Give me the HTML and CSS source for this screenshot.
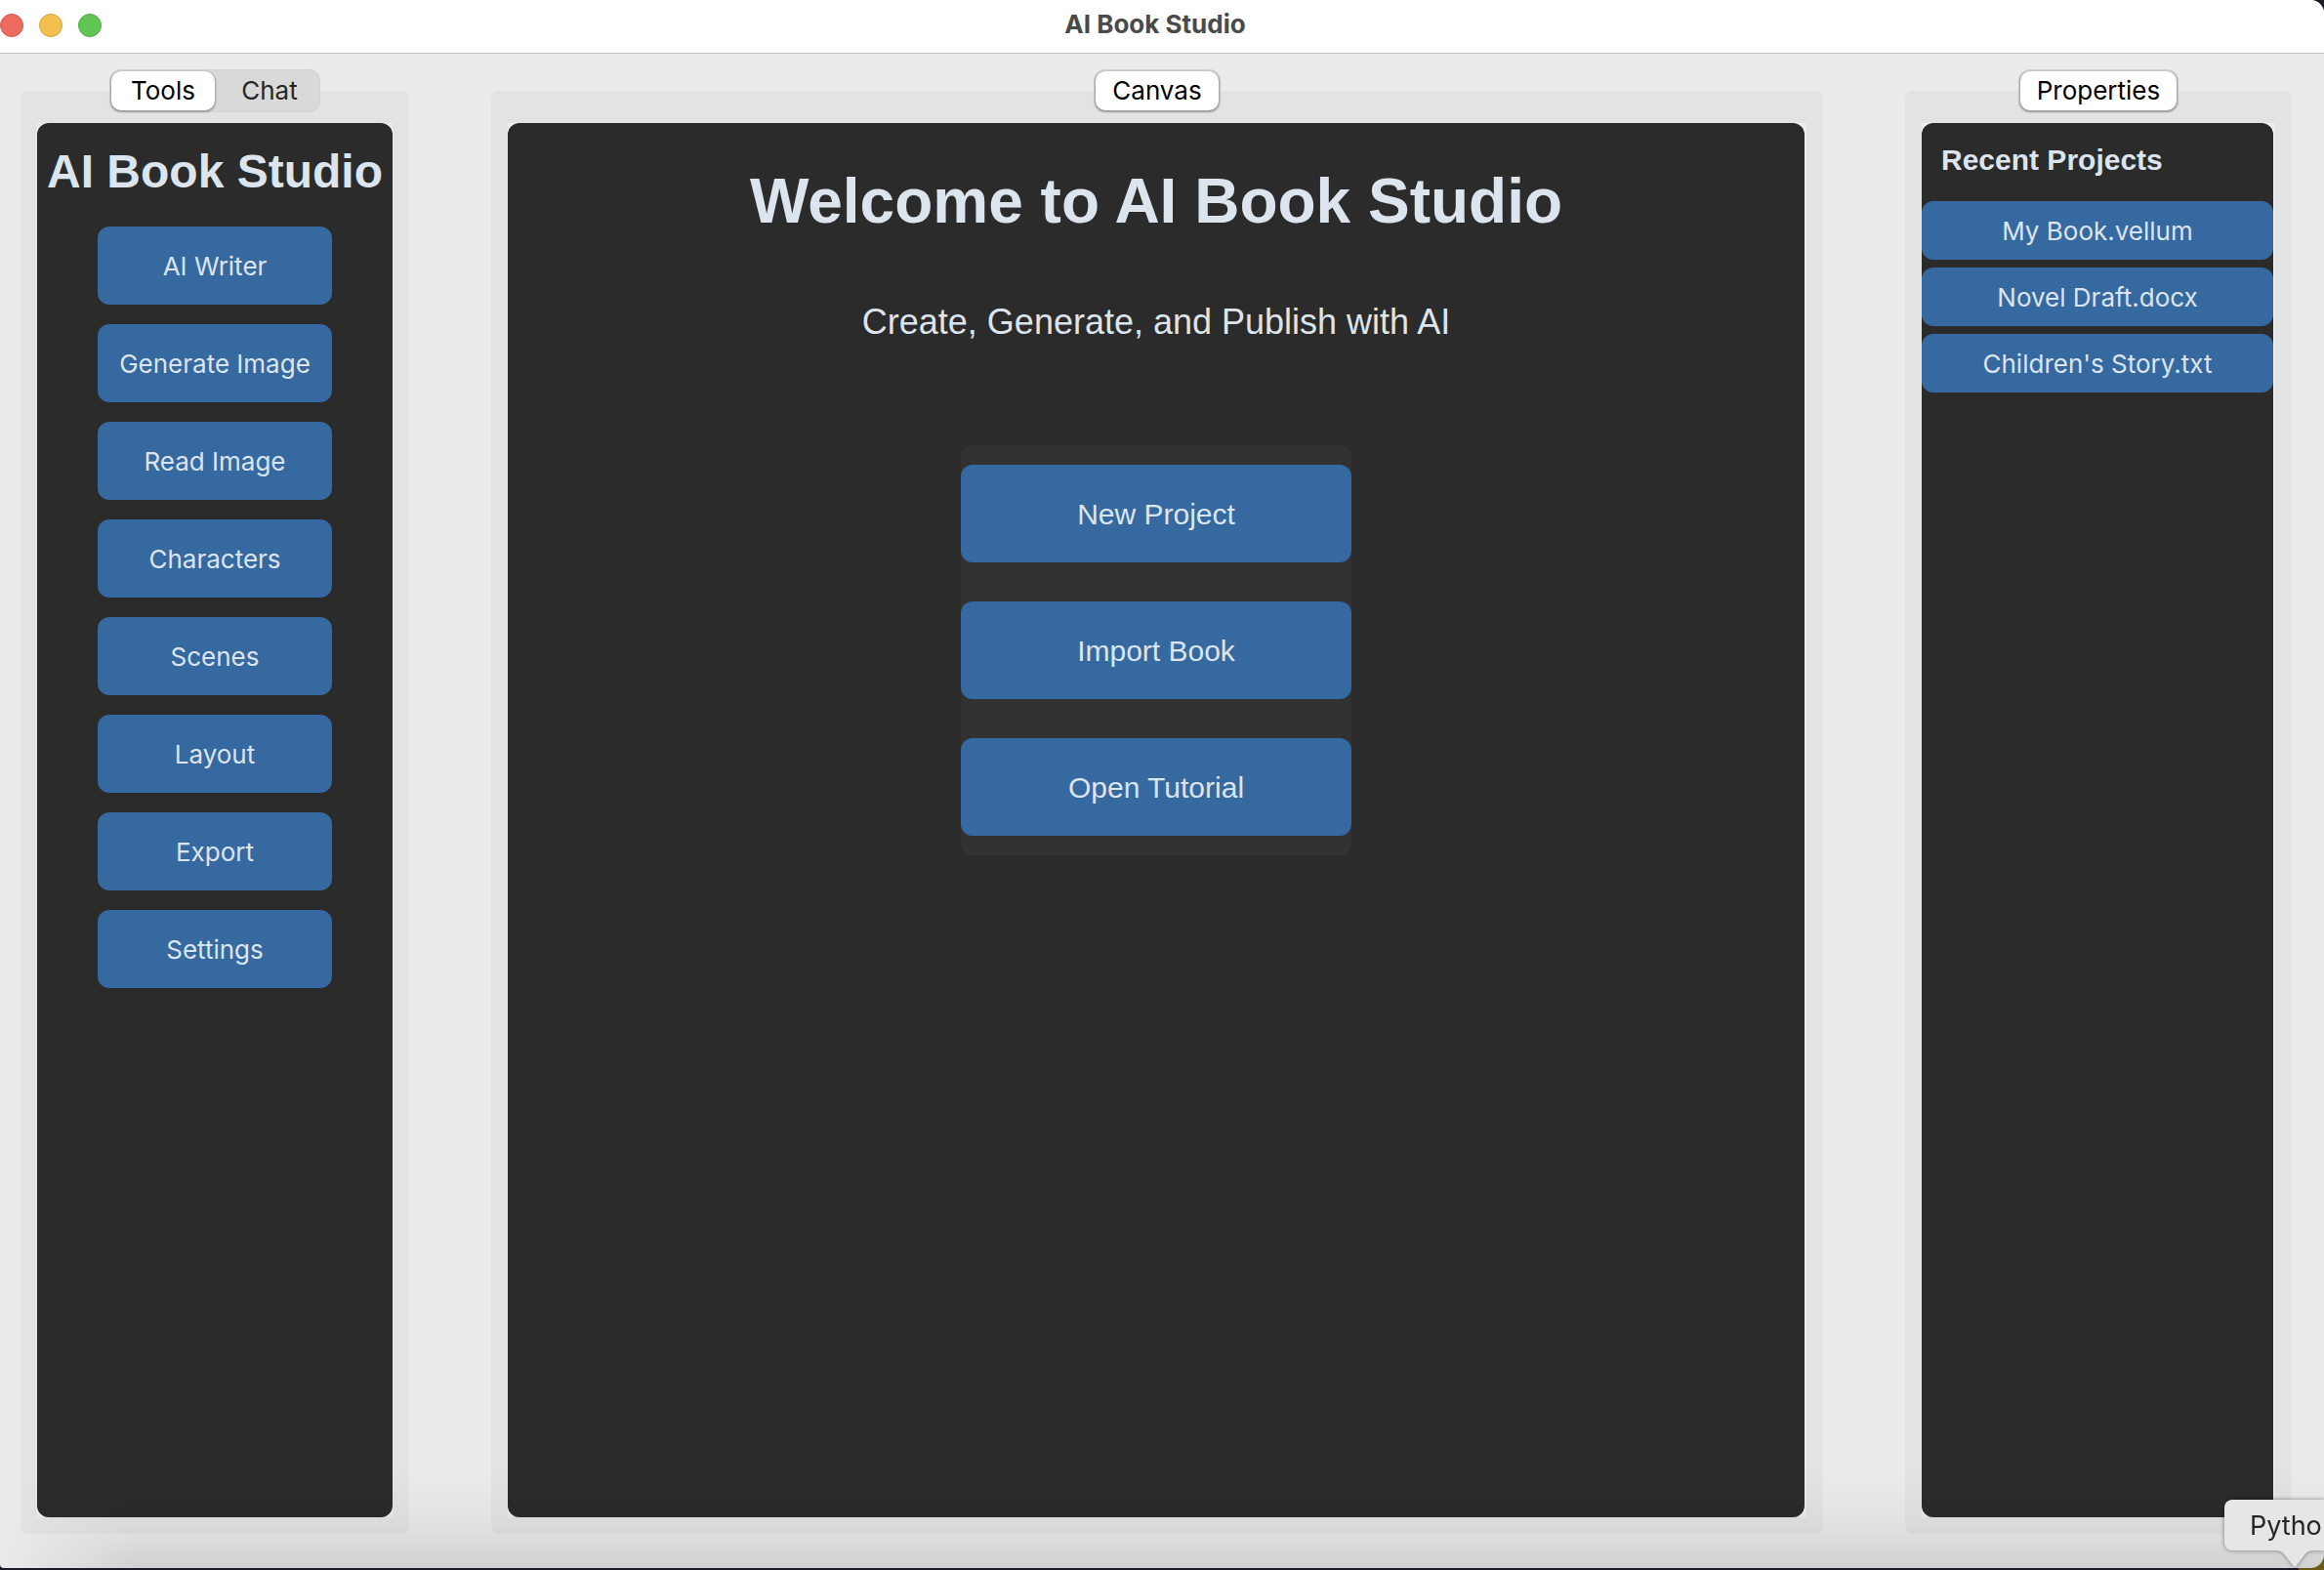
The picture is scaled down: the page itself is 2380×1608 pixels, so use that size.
FILE: index.html
```html
<!DOCTYPE html>
<html lang="en">
<head>
<meta charset="utf-8">
<title>AI Book Studio</title>
<link rel="stylesheet" href="styles.css">
</head>
<body>
<div class="window">
  <header class="titlebar">
    <div class="lights">
      <button class="light close" type="button" aria-label="Close"></button>
      <button class="light minimize" type="button" aria-label="Minimize"></button>
      <button class="light zoom" type="button" aria-label="Zoom"></button>
    </div>
    <div class="window-title">AI Book Studio</div>
  </header>
  <main class="workspace">
    <section class="pane pane-tools">
      <div class="tabs">
        <button class="tab active" type="button">Tools</button>
        <button class="tab" type="button">Chat</button>
      </div>
      <div class="backdrop">
        <div class="panel">
          <h2 class="brand">AI Book Studio</h2>
          <nav class="tool-list">
            <button class="btn" type="button">AI Writer</button>
            <button class="btn" type="button">Generate Image</button>
            <button class="btn" type="button">Read Image</button>
            <button class="btn" type="button">Characters</button>
            <button class="btn" type="button">Scenes</button>
            <button class="btn" type="button">Layout</button>
            <button class="btn" type="button">Export</button>
            <button class="btn" type="button">Settings</button>
          </nav>
        </div>
      </div>
    </section>
    <section class="pane pane-canvas">
      <div class="tabs">
        <button class="tab active" type="button">Canvas</button>
      </div>
      <div class="backdrop inset">
        <div class="panel">
          <h1 class="welcome">Welcome to AI Book Studio</h1>
          <p class="tagline">Create, Generate, and Publish with AI</p>
          <div class="start-menu">
            <button class="btn btn-large" type="button">New Project</button>
            <button class="btn btn-large" type="button">Import Book</button>
            <button class="btn btn-large" type="button">Open Tutorial</button>
          </div>
        </div>
      </div>
    </section>
    <section class="pane pane-properties">
      <div class="tabs">
        <button class="tab active" type="button">Properties</button>
      </div>
      <div class="backdrop inset">
        <div class="panel">
          <h2 class="recent-title">Recent Projects</h2>
          <div class="recent-list">
            <button class="btn btn-recent" type="button">My Book.vellum</button>
            <button class="btn btn-recent" type="button">Novel Draft.docx</button>
            <button class="btn btn-recent" type="button">Children's Story.txt</button>
          </div>
        </div>
      </div>
    </section>
  </main>
</div>
<div class="dock-tip">Pytho
  <svg class="dock-arrow" viewBox="0 0 40 18" aria-hidden="true"><path d="M0 0H40C34 0 32 2 29 6L22 15Q20 18 18 15L11 6C8 2 6 0 0 0Z"/></svg>
</div>
</body>
</html>
```
FILE: styles.css
```css
* { box-sizing: border-box; }

body {
  margin: 0;
  position: relative;
  height: 100vh;
  padding-bottom: 2px;
  overflow: hidden;
  background: linear-gradient(#6b5a14, #6b5a14) right bottom / 26px 20px no-repeat #1b1b28;
  font-family: Inter, "Liberation Sans", sans-serif;
}

button {
  border: 0;
  padding: 0;
  font: inherit;
}

h1, h2, p { margin: 0; }

.window {
  position: relative;
  display: flex;
  flex-direction: column;
  height: 100%;
  border-radius: 0 14px 14px 4px;
  overflow: hidden;
  background: #ebebeb;
}

/* Soft shade cast by the dock along the bottom edge */
.window::after {
  content: "";
  position: absolute;
  inset: auto 0 0;
  height: 100px;
  background: linear-gradient(rgba(0, 0, 0, 0), rgba(0, 0, 0, 0.03) 50%, rgba(0, 0, 0, 0.11));
  mask-image: linear-gradient(90deg, transparent, #000 140px);
  pointer-events: none;
}

.titlebar {
  display: grid;
  grid-template-columns: 1fr auto 1fr;
  align-items: center;
  height: 55px;
  padding: 0 14px 2px 0;
  border-bottom: 1px solid #bfbfbf;
  background: #fff;
}

.lights {
  display: flex;
  gap: 16px;
}

.light {
  width: 24px;
  height: 24px;
  border: 1px solid;
  border-radius: 50%;
}

.close { background: #ec6a5e; border-color: #d5584c; }
.minimize { background: #f5bf4f; border-color: #d9a13c; }
.zoom { background: #61c554; border-color: #4eab41; }

.window-title {
  padding-bottom: 2px;
  color: #4a4a4a;
  font-size: 26px;
  font-weight: 700;
  line-height: 32px;
}

.workspace {
  flex: 1;
  display: flex;
  gap: 84px;
  padding: 38px 33px 35px 21px;
}

.pane {
  display: flex;
  flex-direction: column;
  align-items: center;
  padding: 0 17px 17px;
  border-radius: 8px;
  background: #e3e3e3;
}

.pane-tools { flex: 0 0 398px; }
.pane-canvas { flex: 1; }
.pane-properties { flex: 0 0 396px; }

.tabs {
  display: flex;
  height: 44px;
  margin: -22px 0 11px;
  padding: 2px;
  border-radius: 12px;
  background: #d9d9d9;
  box-shadow: inset 0 0 1px 1px #d2d2d2;
}

.tab {
  min-width: 106px;
  padding: 0 20px 0 26px;
  border-radius: 10px;
  background: none;
  color: #262626;
  font-size: 26px;
  line-height: 40px;
}

.tab.active {
  padding: 0 17px;
  background: #fff;
  color: #000;
  box-shadow: 0 1px 2px 1px rgba(0, 0, 0, 0.28);
}

.backdrop {
  flex: 1;
  display: flex;
  width: 100%;
  background: #ececec;
}

.inset { padding-right: 2px; }

.panel {
  flex: 1;
  display: flex;
  flex-direction: column;
  align-items: center;
  border-radius: 12px;
  background: #2b2b2b;
  color: #dce4ee;
  font-family: "Liberation Sans", Arial, sans-serif;
}

.brand {
  margin: 22px 0 28px;
  font-size: 48px;
  line-height: 56px;
}

.tool-list {
  display: flex;
  flex-direction: column;
  gap: 20px;
}

.btn {
  width: 240px;
  height: 80px;
  padding-top: 2px;
  border-radius: 12px;
  background: #36699f;
  color: #dce4ee;
  font-family: Inter, "Liberation Sans", sans-serif;
  font-size: 26px;
  line-height: 32px;
}

.welcome {
  margin-top: 44px;
  font-size: 64px;
  line-height: 72px;
}

.tagline {
  margin: 68px 0 106px;
  font-size: 36px;
  line-height: 40px;
}

.start-menu {
  display: flex;
  flex-direction: column;
  gap: 40px;
  padding: 20px 0;
  border-radius: 12px;
  background: #323232;
}

.btn-large {
  width: 400px;
  height: 100px;
  font-family: "Liberation Sans", Arial, sans-serif;
  font-size: 30px;
}

.recent-title {
  align-self: flex-start;
  margin: 20px 20px 24px;
  font-size: 30px;
  line-height: 36px;
}

.recent-list {
  display: flex;
  flex-direction: column;
  gap: 8px;
  width: 100%;
}

.btn-recent {
  width: 100%;
  height: 60px;
}

.dock-tip {
  position: absolute;
  right: 0;
  bottom: 20px;
  height: 52px;
  width: 102px;
  padding-left: 26px;
  border-radius: 8px 0 0 8px;
  background: #e6e6e6;
  color: #262626;
  font-size: 27px;
  line-height: 54px;
  white-space: nowrap;
  filter: drop-shadow(0 0 2px rgba(0, 0, 0, 0.45));
}

.dock-arrow {
  position: absolute;
  top: 100%;
  left: 52px;
  width: 40px;
  height: 18px;
  fill: #e6e6e6;
}
```
